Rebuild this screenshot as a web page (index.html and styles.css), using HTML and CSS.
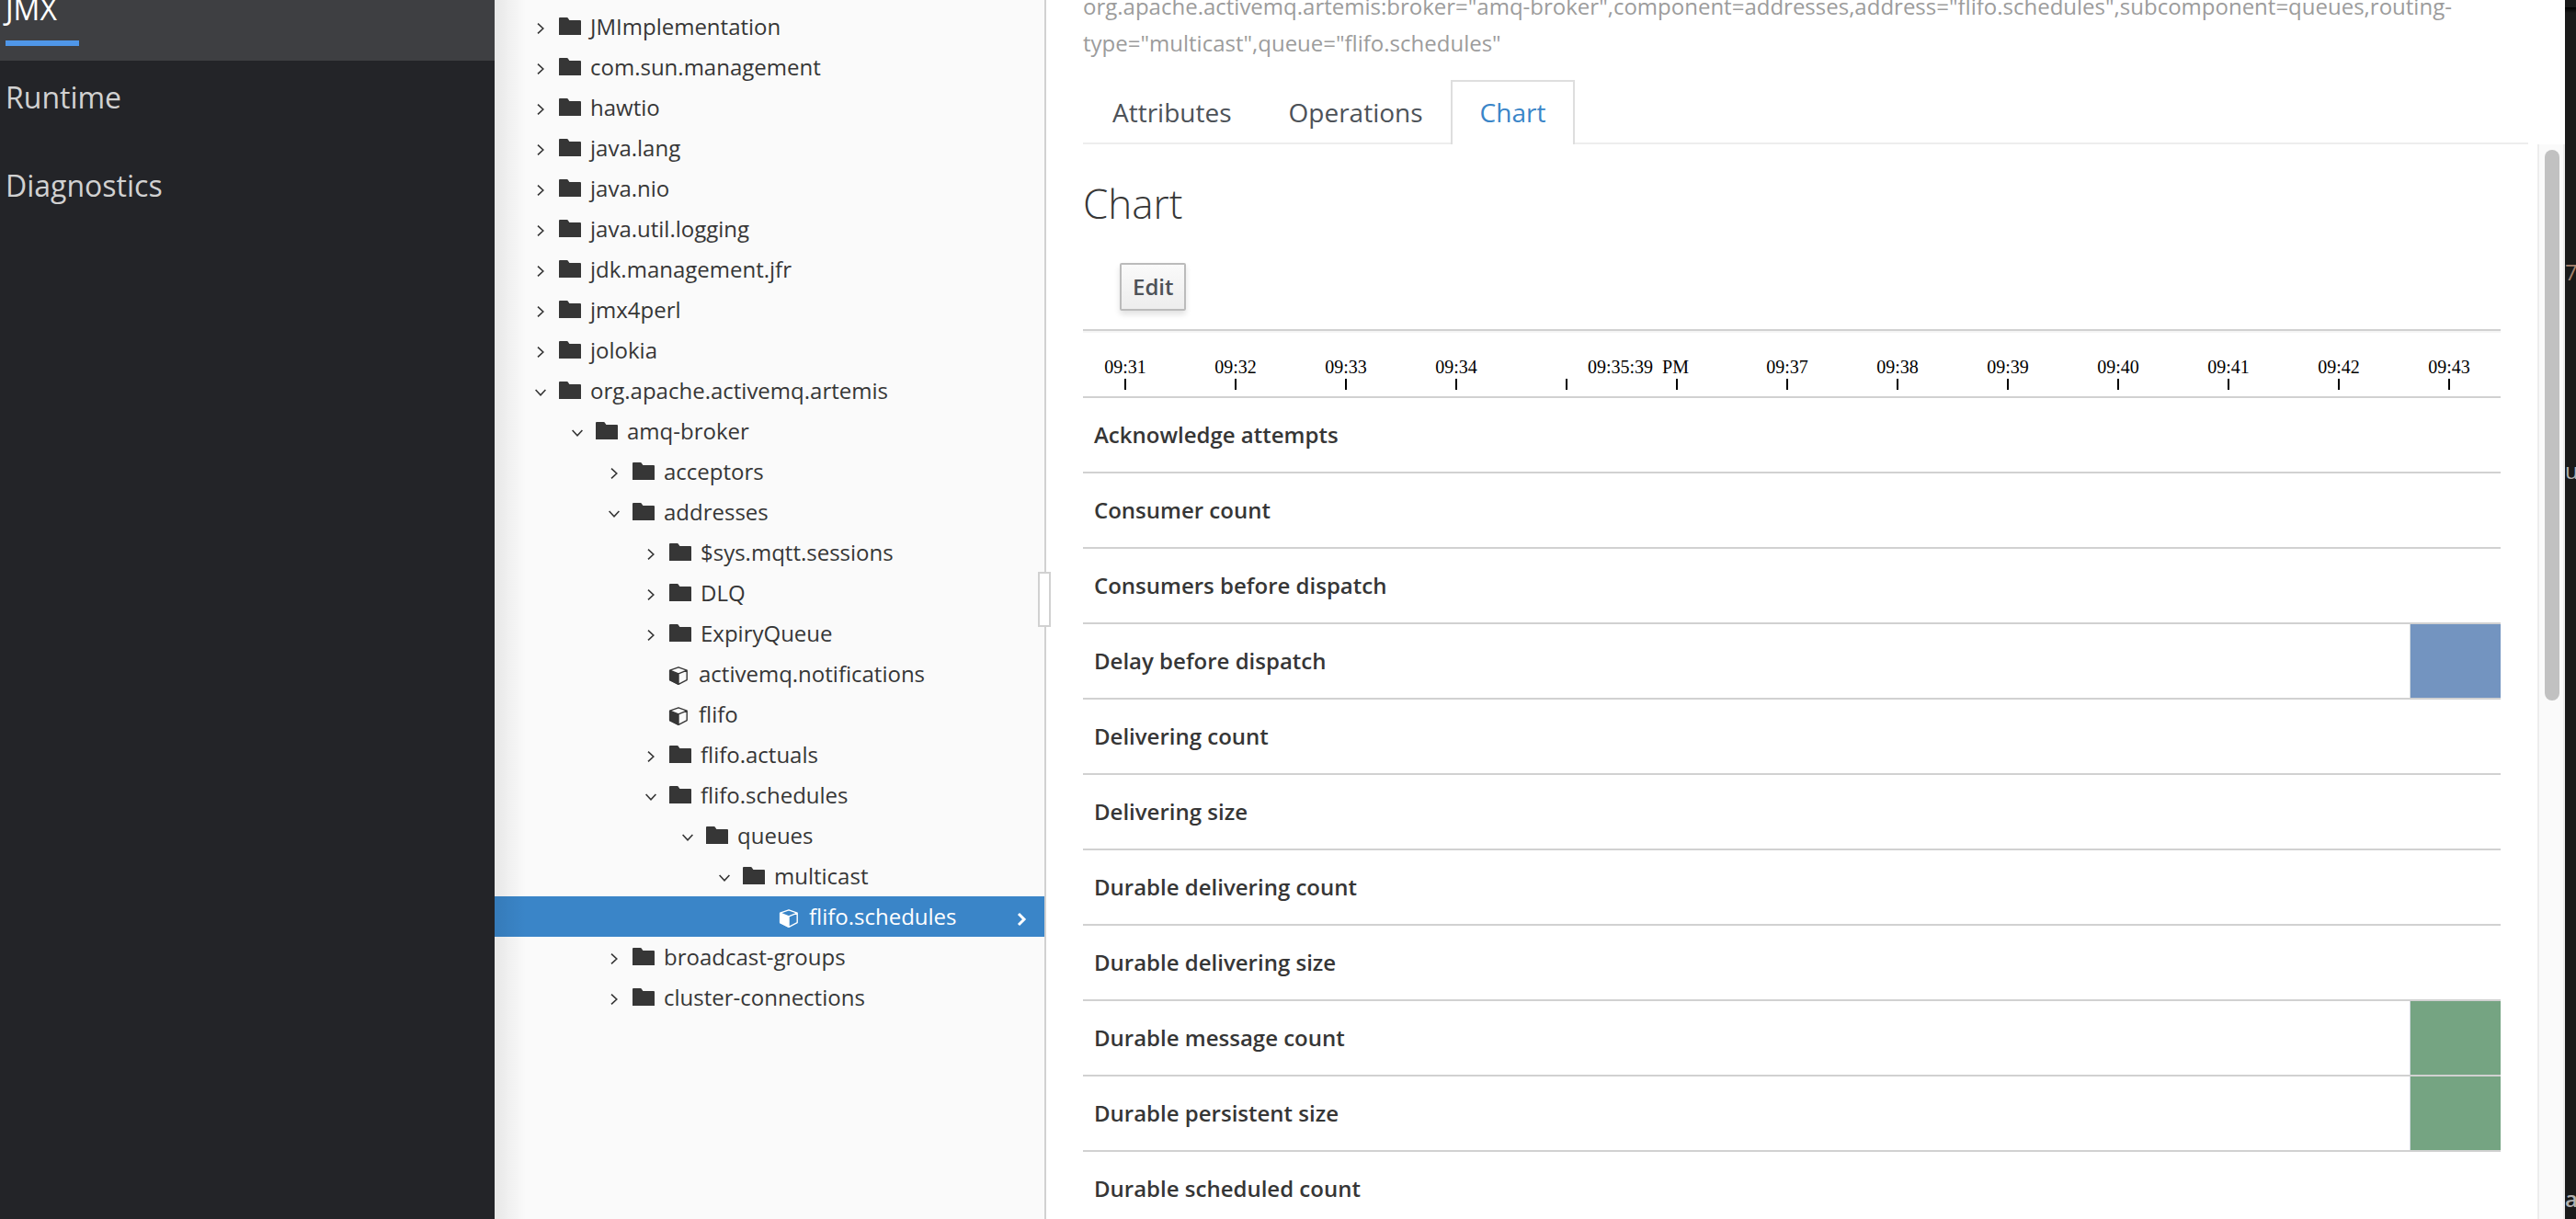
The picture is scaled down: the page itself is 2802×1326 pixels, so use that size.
FILE: index.html
```html
<!DOCTYPE html>
<html lang="en">
<head>
<meta charset="utf-8">
<title>JMX - Chart</title>
<link rel="stylesheet" href="styles.css">
</head>
<body>
<svg class="sprite" aria-hidden="true">
  <symbol id="right" viewBox="0 0 12 12"><path d="M3 0.6 L8.8 6 L3 11.4" fill="none" stroke="currentColor" stroke-width="1.6"/></symbol>
  <symbol id="down" viewBox="0 0 12 12"><path d="M0.6 3 L6 8.8 L11.4 3" fill="none" stroke="currentColor" stroke-width="1.6"/></symbol>
  <symbol id="folder" viewBox="0 0 24 20"><path d="M0 1 Q0 0 1 0 H8.5 Q9.6 0 10.2 1.2 L11.4 3 H23 Q24 3 24 4 V19 H0 Z" fill="currentColor"/></symbol>
  <symbol id="cube" viewBox="0 0 22 22"><path d="M11 1.8 L20.2 5.2 V15.6 L11 20.4 L1.6 15.6 V5.2 Z M1.6 5.2 L11 8.8 L20.2 5.2 M11 8.8 V20.4" fill="none" stroke="currentColor" stroke-width="1.4" stroke-linejoin="round"/><path d="M1 5 L11 9 V21 L1 16 Z" fill="currentColor"/></symbol>
</svg>
<div class="app">
  <nav class="sidebar">
    <ul class="nav-list">
      <li class="nav-item active"><a href="#jmx">JMX</a></li>
      <li class="nav-item"><a href="#runtime">Runtime</a></li>
      <li class="nav-item"><a href="#diagnostics">Diagnostics</a></li>
    </ul>
  </nav>

  <aside class="tree-pane">
    <ul class="tree">
      <li class="node level-0"><button class="toggle" aria-label="Expand"><svg><use href="#right"/></svg></button><svg class="folder"><use href="#folder"/></svg><span>JMImplementation</span></li>
      <li class="node level-0"><button class="toggle" aria-label="Expand"><svg><use href="#right"/></svg></button><svg class="folder"><use href="#folder"/></svg><span>com.sun.management</span></li>
      <li class="node level-0"><button class="toggle" aria-label="Expand"><svg><use href="#right"/></svg></button><svg class="folder"><use href="#folder"/></svg><span>hawtio</span></li>
      <li class="node level-0"><button class="toggle" aria-label="Expand"><svg><use href="#right"/></svg></button><svg class="folder"><use href="#folder"/></svg><span>java.lang</span></li>
      <li class="node level-0"><button class="toggle" aria-label="Expand"><svg><use href="#right"/></svg></button><svg class="folder"><use href="#folder"/></svg><span>java.nio</span></li>
      <li class="node level-0"><button class="toggle" aria-label="Expand"><svg><use href="#right"/></svg></button><svg class="folder"><use href="#folder"/></svg><span>java.util.logging</span></li>
      <li class="node level-0"><button class="toggle" aria-label="Expand"><svg><use href="#right"/></svg></button><svg class="folder"><use href="#folder"/></svg><span>jdk.management.jfr</span></li>
      <li class="node level-0"><button class="toggle" aria-label="Expand"><svg><use href="#right"/></svg></button><svg class="folder"><use href="#folder"/></svg><span>jmx4perl</span></li>
      <li class="node level-0"><button class="toggle" aria-label="Expand"><svg><use href="#right"/></svg></button><svg class="folder"><use href="#folder"/></svg><span>jolokia</span></li>
      <li class="node level-0"><button class="toggle" aria-label="Collapse"><svg><use href="#down"/></svg></button><svg class="folder"><use href="#folder"/></svg><span>org.apache.activemq.artemis</span></li>
      <li class="node level-1"><button class="toggle" aria-label="Collapse"><svg><use href="#down"/></svg></button><svg class="folder"><use href="#folder"/></svg><span>amq-broker</span></li>
      <li class="node level-2"><button class="toggle" aria-label="Expand"><svg><use href="#right"/></svg></button><svg class="folder"><use href="#folder"/></svg><span>acceptors</span></li>
      <li class="node level-2"><button class="toggle" aria-label="Collapse"><svg><use href="#down"/></svg></button><svg class="folder"><use href="#folder"/></svg><span>addresses</span></li>
      <li class="node level-3"><button class="toggle" aria-label="Expand"><svg><use href="#right"/></svg></button><svg class="folder"><use href="#folder"/></svg><span>$sys.mqtt.sessions</span></li>
      <li class="node level-3"><button class="toggle" aria-label="Expand"><svg><use href="#right"/></svg></button><svg class="folder"><use href="#folder"/></svg><span>DLQ</span></li>
      <li class="node level-3"><button class="toggle" aria-label="Expand"><svg><use href="#right"/></svg></button><svg class="folder"><use href="#folder"/></svg><span>ExpiryQueue</span></li>
      <li class="node leaf level-3"><svg class="cube"><use href="#cube"/></svg><span>activemq.notifications</span></li>
      <li class="node leaf level-3"><svg class="cube"><use href="#cube"/></svg><span>flifo</span></li>
      <li class="node level-3"><button class="toggle" aria-label="Expand"><svg><use href="#right"/></svg></button><svg class="folder"><use href="#folder"/></svg><span>flifo.actuals</span></li>
      <li class="node level-3"><button class="toggle" aria-label="Collapse"><svg><use href="#down"/></svg></button><svg class="folder"><use href="#folder"/></svg><span>flifo.schedules</span></li>
      <li class="node level-4"><button class="toggle" aria-label="Collapse"><svg><use href="#down"/></svg></button><svg class="folder"><use href="#folder"/></svg><span>queues</span></li>
      <li class="node level-5"><button class="toggle" aria-label="Collapse"><svg><use href="#down"/></svg></button><svg class="folder"><use href="#folder"/></svg><span>multicast</span></li>
      <li class="node leaf selected level-6"><svg class="cube"><use href="#cube"/></svg><span>flifo.schedules</span><svg class="pointer" viewBox="0 0 14 16"><path d="M3 2 L9 8 L3 14" fill="none" stroke="currentColor" stroke-width="3"/></svg></li>
      <li class="node level-2"><button class="toggle" aria-label="Expand"><svg><use href="#right"/></svg></button><svg class="folder"><use href="#folder"/></svg><span>broadcast-groups</span></li>
      <li class="node level-2"><button class="toggle" aria-label="Expand"><svg><use href="#right"/></svg></button><svg class="folder"><use href="#folder"/></svg><span>cluster-connections</span></li>
    </ul>
    <div class="splitter"></div>
  </aside>

  <main class="main">
    <header class="page-head">
      <p class="object-name">org.apache.activemq.artemis:broker="amq-broker",component=addresses,address="flifo.schedules",subcomponent=queues,routing-type="multicast",queue="flifo.schedules"</p>
      <nav class="tabs">
        <a class="tab" href="#attributes">Attributes</a>
        <a class="tab" href="#operations">Operations</a>
        <a class="tab current" href="#chart">Chart</a>
      </nav>
    </header>
    <div class="scroll-area">
      <section class="content">
        <h1>Chart</h1>
        <button class="edit">Edit</button>
        <div class="chart">
          <div class="axis">
            <div class="tick">09:31</div>
            <div class="tick">09:32</div>
            <div class="tick">09:33</div>
            <div class="tick">09:34</div>
            <div class="tick"></div>
            <div class="tick"></div>
            <div class="tick">09:37</div>
            <div class="tick">09:38</div>
            <div class="tick">09:39</div>
            <div class="tick">09:40</div>
            <div class="tick">09:41</div>
            <div class="tick">09:42</div>
            <div class="tick">09:43</div>
            <div class="cursor-time">09:35:39&nbsp; PM</div>
          </div>
          <div class="series">Acknowledge attempts</div>
          <div class="series">Consumer count</div>
          <div class="series">Consumers before dispatch</div>
          <div class="series">Delay before dispatch<span class="area blue"></span></div>
          <div class="series">Delivering count</div>
          <div class="series">Delivering size</div>
          <div class="series">Durable delivering count</div>
          <div class="series">Durable delivering size</div>
          <div class="series">Durable message count<span class="area green"></span></div>
          <div class="series">Durable persistent size<span class="area green"></span></div>
          <div class="series">Durable scheduled count</div>
        </div>
      </section>
      <div class="scrollbar"><div class="thumb"></div></div>
    </div>
  </main>

  <div class="backdrop">
    <span class="glyph number">7</span>
    <span class="glyph upper">u</span>
    <span class="glyph lower">a</span>
  </div>
</div>
</body>
</html>
```
FILE: styles.css
```css
* { box-sizing: border-box; }

body {
  margin: 0;
  overflow: hidden;
  font-family: "Open Sans", "Noto Sans", sans-serif;
  font-size: 24px;
  color: #363636;
  background: #fff;
}

ul { list-style: none; margin: 0; padding: 0; }
a { color: inherit; text-decoration: none; }
svg { display: block; flex: none; }
.sprite { display: none; }

.app { display: flex; height: 100vh; }

/* Side navigation */
.sidebar { flex: none; width: 538px; background: #232428; overflow: hidden; }
.nav-list { margin-top: -30px; }
.nav-item { height: 96px; padding: 18px 6px; font-size: 32px; line-height: 44px; color: #d1d1d1; }
.nav-item a { display: block; }
.nav-item.active { background: #3e3f42; color: #fff; }
.nav-item.active::after { content: ""; display: block; width: 80px; height: 6px; margin-top: 12px; background: #4f96e8; }

/* Object tree */
.tree-pane { position: relative; flex: none; width: 600px; background: #fafafa; border-right: 2px solid #d1d1d1; }
.tree-pane::before {
  content: "";
  position: absolute;
  inset: 0 auto 0 0;
  width: 34px;
  background: linear-gradient(to right, rgba(0, 0, 0, .08), rgba(0, 0, 0, .04) 45%, rgba(0, 0, 0, 0));
}
.tree { padding-top: 7px; }
.node { display: flex; height: 44px; line-height: 44px; padding-left: calc(44px + var(--level) * 40px); }
.level-0 { --level: 0; }
.level-1 { --level: 1; }
.level-2 { --level: 2; }
.level-3 { --level: 3; }
.level-4 { --level: 4; }
.level-5 { --level: 5; }
.level-6 { --level: 6; }
.toggle { width: 26px; height: 44px; padding: 4px 0 0; border: 0; background: none; color: inherit; }
.toggle svg { width: 12px; height: 12px; }
.folder { width: 24px; height: 20px; margin: 12px 10px 0 0; }
.leaf { padding-left: calc(69px + var(--level) * 40px); }
.cube { width: 22px; height: 22px; margin: 13px 11px 0 0; }
.selected { background: #3a85c8; color: #fff; }
.pointer { width: 14px; height: 16px; margin: 17px 17px 0 auto; }
.splitter { position: absolute; right: -7px; top: 622px; width: 14px; height: 60px; background: #fff; border: 2px solid #d1d1d1; }

/* Page header */
.main { flex: 1; min-width: 0; display: flex; flex-direction: column; background: #fff; }
.page-head { flex: none; padding: 0 40px; }
.object-name { margin: -13px 0 20px; line-height: 40px; color: #9c9c9c; }
.tabs { display: flex; height: 70px; border-bottom: 2px solid #ededed; }
.tab { height: 70px; padding: 0 30px; border: 2px solid transparent; border-bottom: 0; font-size: 28px; line-height: 66px; color: #4d5258; }
.tab + .tab { margin-left: -2px; }
.tab.current { border-color: #dedede; background: #fff; color: #3a85c8; }

/* Chart */
.scroll-area { flex: 1; min-height: 0; display: flex; }
.content { flex: 1; min-width: 0; padding: 40px 40px 0; overflow: hidden; }
h1 { margin: 0 0 41px; font-size: 44px; line-height: 48px; font-weight: 300; }
.edit {
  display: block;
  height: 52px;
  margin-left: 40px;
  padding: 0 11px 2px 12px;
  border: 2px solid #bbb;
  border-radius: 2px;
  background: linear-gradient(#fafafa, #ededed);
  box-shadow: 0 4px 6px rgba(0, 0, 0, .12);
  font: 600 24px "Open Sans", sans-serif;
  color: #4d5258;
}
.chart { margin-top: 20px; border-top: 2px solid #d1d1d1; }
.axis {
  position: relative;
  display: flex;
  justify-content: flex-end;
  overflow: hidden;
  padding: 25px 0 7px;
  border-top: 2px solid #f5f5f5;
  border-bottom: 2px solid #d1d1d1;
  font: 20px/24px "Liberation Serif", serif;
  color: #000;
}
.tick { flex: none; width: 120px; height: 37px; text-align: center; display: flex; flex-direction: column; justify-content: flex-end; align-items: center; }
.tick:nth-last-child(2) { margin-right: -4px; }
.tick::after { content: ""; width: 2px; height: 12px; margin-top: 1px; background: #000; }
.cursor-time { position: absolute; top: 25px; right: 883px; white-space: nowrap; }
.series { display: flex; justify-content: space-between; height: 82px; padding-left: 12px; border-bottom: 2px solid #d1d1d1; font-weight: 600; line-height: 80px; }
.area { width: 99px; border-left: 1px solid #d1d8de; }
.blue { background: #7394c0; }
.green { background: #75a482; }

.scrollbar { flex: none; width: 30px; padding: 6px; border: solid #ededed; border-width: 0 2px; background: #fafafa; }
.thumb { width: 16px; height: 599px; border-radius: 8px; background: #c1c1c1; }

/* Edge of the window behind */
.backdrop { position: relative; flex: none; width: 12px; overflow: hidden; background: linear-gradient(#1a1a1a 8px, #000 8px, #1a1a1a 14px); color: #b0b0b0; }
.glyph { position: absolute; left: 0; line-height: 32px; }
.number { top: 280px; color: #a5806e; }
.upper { top: 496px; }
.lower { top: 1288px; font-weight: 600; }
```
